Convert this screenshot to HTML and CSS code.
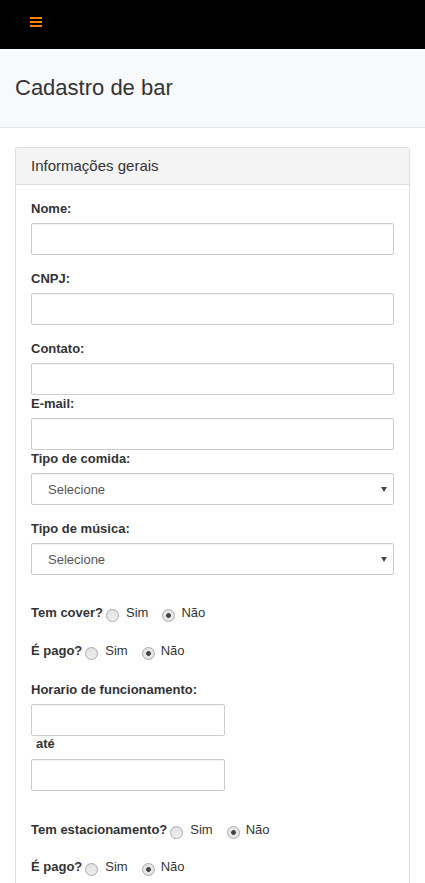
FILE: index.html
```html
<!DOCTYPE html>
<html lang="pt-BR">
<head>
<meta charset="utf-8">
<title>Cadastro de bar</title>
<link rel="stylesheet" href="styles.css">
</head>
<body>
<header class="topbar">
  <svg class="burger" width="12" height="10" viewBox="0 0 12 10" aria-hidden="true">
    <rect x="0" y="0" width="12" height="2" fill="#ff8000"/>
    <rect x="0" y="4" width="12" height="2" fill="#ff8000"/>
    <rect x="0" y="8" width="12" height="2" fill="#ff8000"/>
  </svg>
</header>
<div class="titlebar"><h1 class="title">Cadastro de bar</h1></div>
<section class="panel">
  <div class="panel-heading"><h3 class="panel-title">Informações gerais</h3></div>
  <div class="panel-body">
    <div class="group">
      <label class="lbl">Nome:</label>
      <input class="field" type="text">
    </div>
    <div class="group">
      <label class="lbl">CNPJ:</label>
      <input class="field" type="text">
    </div>
    <div class="group tight">
      <label class="lbl">Contato:</label>
      <input class="field" type="text">
    </div>
    <div class="group tight">
      <label class="lbl">E-mail:</label>
      <input class="field" type="text">
    </div>
    <div class="group">
      <label class="lbl">Tipo de comida:</label>
      <div class="select-wrap"><select class="field select"><option>Selecione</option></select></div>
    </div>
    <div class="group">
      <label class="lbl">Tipo de música:</label>
      <div class="select-wrap"><select class="field select"><option>Selecione</option></select></div>
    </div>
    <div class="radio-row r-cover">
      <span class="q">Tem cover?</span><input class="radio" type="radio" name="cover"><span class="opt">Sim</span><input class="radio second" type="radio" name="cover" checked><span class="opt">Não</span>
    </div>
    <div class="radio-row r-pago1">
      <span class="q">É pago?</span><input class="radio" type="radio" name="pago1"><span class="opt">Sim</span><input class="radio second" type="radio" name="pago1" checked><span class="opt">Não</span>
    </div>
    <label class="lbl hor">Horario de funcionamento:</label>
    <input class="field short" type="text">
    <div class="ate">até</div>
    <input class="field short" type="text">
    <div class="radio-row r-est">
      <span class="q">Tem estacionamento?</span><input class="radio" type="radio" name="est"><span class="opt">Sim</span><input class="radio second" type="radio" name="est" checked><span class="opt">Não</span>
    </div>
    <div class="radio-row r-pago2">
      <span class="q">É pago?</span><input class="radio" type="radio" name="pago2"><span class="opt">Sim</span><input class="radio second" type="radio" name="pago2" checked><span class="opt">Não</span>
    </div>
  </div>
</section>
</body>
</html>
```
FILE: styles.css
```css
html, body {
  margin: 0;
  padding: 0;
  background: #fff;
}
body {
  font-family: "Liberation Sans", Arial, sans-serif;
  font-size: 13px;
  color: #333;
}
.topbar {
  height: 49px;
  background: #000;
  box-sizing: border-box;
  padding: 17px 0 0 30px;
}
.burger { display: block; }
.titlebar {
  height: 78px;
  background: #f8f9fb;
  border-bottom: 1px solid #e8e8e8;
  display: flex;
  align-items: center;
  padding-left: 15px;
}
.title {
  margin: 0;
  font-size: 22px;
  font-weight: normal;
  color: #333;
  line-height: 26px;
}
.panel {
  margin: 19px 15px 0 15px;
  border: 1px solid #ddd;
  border-bottom: none;
  border-radius: 3px 3px 0 0;
  min-height: 740px;
}
.panel-heading {
  background: #f4f4f4;
  border-bottom: 1px solid #ddd;
  padding: 9px 15px;
}
.panel-title {
  margin: 0;
  font-size: 15px;
  font-weight: normal;
  line-height: 18px;
  color: #333;
}
.panel-body {
  padding: 15px 15px 0 15px;
}
.group { margin-bottom: 15px; }
.group.tight { margin-bottom: 0; }
.lbl {
  display: block;
  font-weight: bold;
  font-size: 13px;
  line-height: 18px;
  margin-bottom: 5px;
  color: #333;
}
.field {
  display: block;
  box-sizing: border-box;
  width: 100%;
  height: 32px;
  margin: 0;
  border: 1px solid #ccc;
  border-radius: 2px;
  background: #fff;
  box-shadow: inset 0 1px 1px rgba(0,0,0,0.05);
  font-family: inherit;
  font-size: 13px;
  color: #555;
  padding: 0 12px;
}
.field.short { width: 194px; }
.select-wrap { position: relative; }
.select {
  -webkit-appearance: none;
  appearance: none;
  padding-left: 16px;
  color: #555;
}
.select-wrap::after {
  content: "";
  position: absolute;
  right: 7px;
  top: 14px;
  border-left: 3px solid transparent;
  border-right: 3px solid transparent;
  border-top: 5px solid #444;
  pointer-events: none;
}
.radio-row {
  display: flex;
  align-items: center;
  height: 20px;
  line-height: 20px;
}
.q { font-weight: bold; }
.opt { color: #333; }
.radio {
  -webkit-appearance: none;
  appearance: none;
  box-sizing: border-box;
  width: 13px;
  height: 13px;
  margin: 5px 7px 0 3px;
  border: 1px solid #a9a9a9;
  border-radius: 50%;
  background: linear-gradient(#e2e2e2, #efefef);
}
.radio.second { margin-left: 14px; margin-right: 6px; }
.radio:checked {
  background: radial-gradient(circle, #444 0, #444 2px, #e6e6e6 2.8px);
}
.r-cover { margin-top: 28px; }
.r-pago1 { margin-top: 18px; }
.hor { margin-top: 20px; }
.ate {
  font-weight: bold;
  line-height: 16px;
  padding-left: 5px;
  margin-bottom: 7px;
}
.r-est { margin-top: 29px; }
.r-pago2 { margin-top: 17px; }
```
